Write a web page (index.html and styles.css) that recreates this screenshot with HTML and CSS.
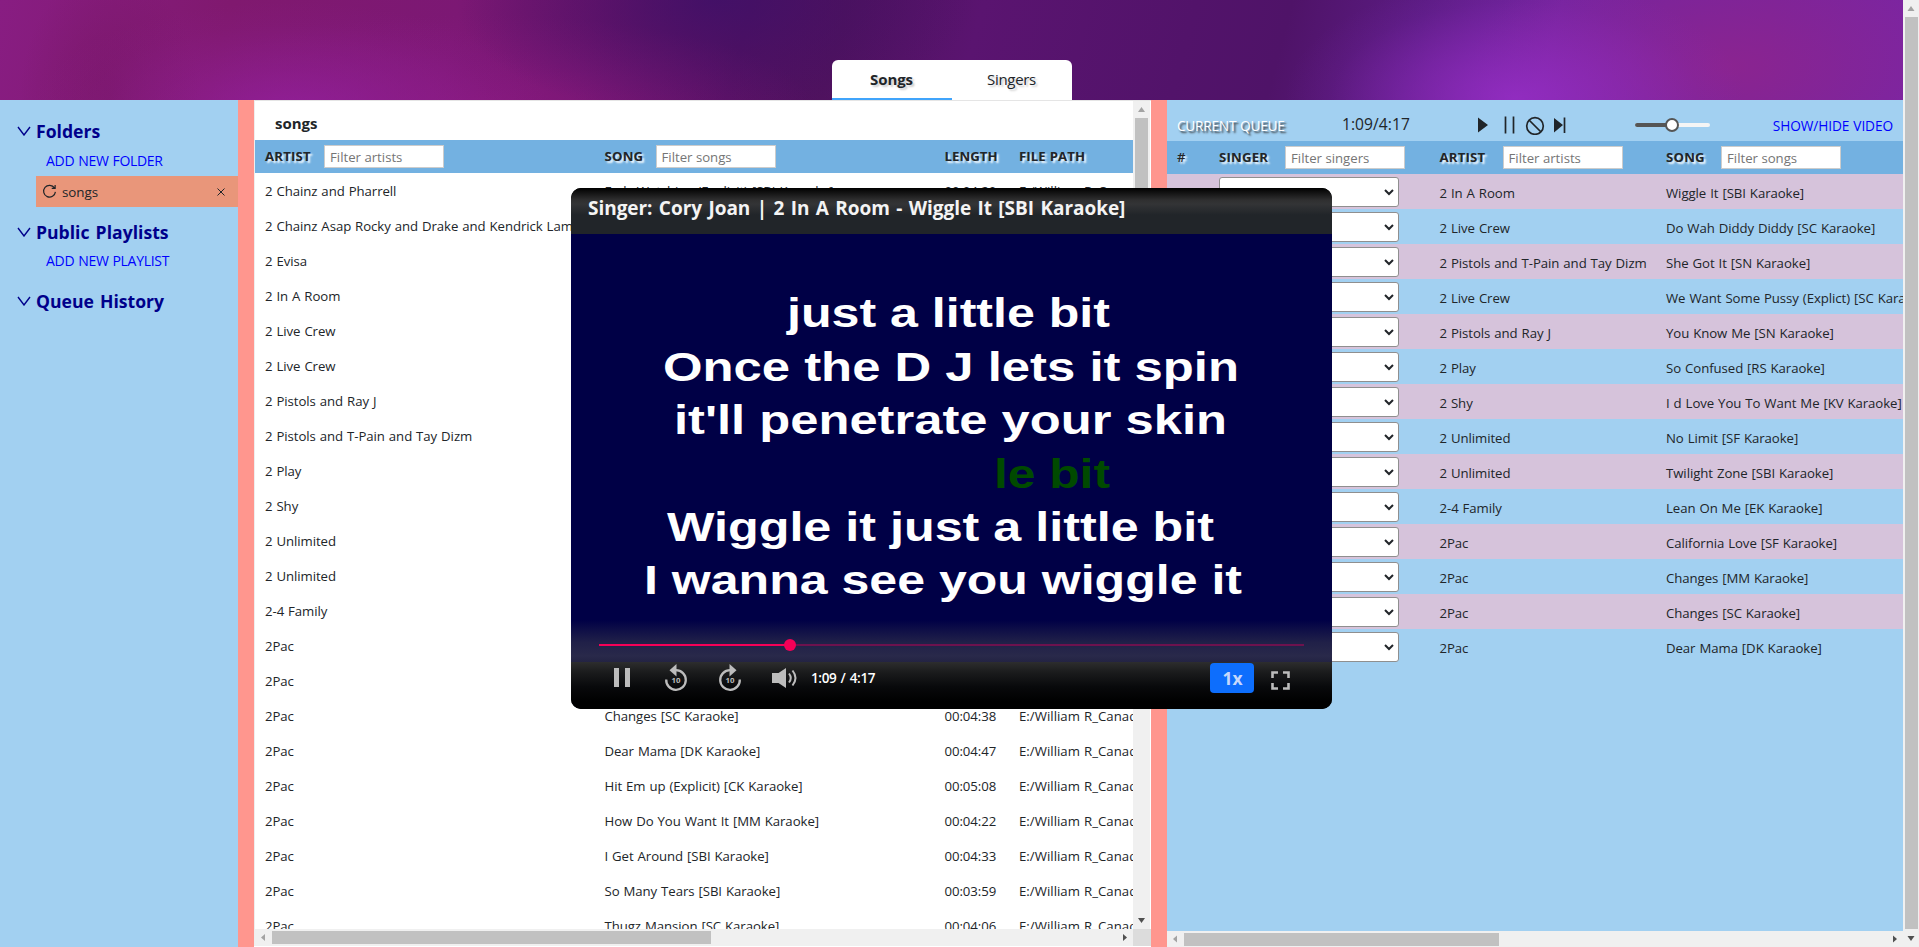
FILE: index.html
```html
<!DOCTYPE html>
<html lang="en">
<head>
<meta charset="utf-8">
<title>Karaoke</title>
<link rel="stylesheet" href="styles.css">
</head>
<body>
<div class="app">
  <div class="page">
    <header class="banner">
      <nav class="tabs"><a class="tab active">Songs</a><a class="tab">Singers</a></nav>
    </header>
    <main class="panes">
      <aside class="sidebar">
        <h2><svg class="chev" viewBox="0 0 14 10"><path d="M1 1l6 8 6-8"/></svg>Folders</h2>
        <a class="add">ADD NEW FOLDER</a>
        <div class="folder">
          <svg class="reload" viewBox="0 0 16 16"><path d="M13.3 4.2A6.3 6.3 0 1 0 14.3 8.4M14 1v3.6h-3.6"/></svg>
          <span>songs</span>
          <svg class="close" viewBox="0 0 8 8"><path d="M.5.5l7 7M7.5.5l-7 7"/></svg>
        </div>
        <h2 class="second"><svg class="chev" viewBox="0 0 14 10"><path d="M1 1l6 8 6-8"/></svg>Public Playlists</h2>
        <a class="add">ADD NEW PLAYLIST</a>
        <h2 class="third"><svg class="chev" viewBox="0 0 14 10"><path d="M1 1l6 8 6-8"/></svg>Queue History</h2>
      </aside>
      <div class="splitter"></div>
      <section class="library">
        <div class="lib-view">
          <div class="lib-content">
            <h3>songs</h3>
            <div class="row lib head"><span><b>ARTIST</b><input class="f1" placeholder="Filter artists"></span><span><b>SONG</b><input class="f2" placeholder="Filter songs"></span><span><b>LENGTH</b></span><span><b>FILE PATH</b></span></div>
            <div class="row lib"><span>2 Chainz and Pharrell</span><span>Feds Watching (Explicit) [SBI Karaoke]</span><span>00:04:20</span><span>E:/William R_Canada</span></div>
            <div class="row lib"><span>2 Chainz Asap Rocky and Drake and Kendrick Lamar</span></div>
            <div class="row lib"><span>2 Evisa</span></div>
            <div class="row lib"><span>2 In A Room</span></div>
            <div class="row lib"><span>2 Live Crew</span></div>
            <div class="row lib"><span>2 Live Crew</span></div>
            <div class="row lib"><span>2 Pistols and Ray J</span></div>
            <div class="row lib"><span>2 Pistols and T-Pain and Tay Dizm</span></div>
            <div class="row lib"><span>2 Play</span></div>
            <div class="row lib"><span>2 Shy</span></div>
            <div class="row lib"><span>2 Unlimited</span></div>
            <div class="row lib"><span>2 Unlimited</span></div>
            <div class="row lib"><span>2-4 Family</span></div>
            <div class="row lib"><span>2Pac</span></div>
            <div class="row lib"><span>2Pac</span></div>
            <div class="row lib"><span>2Pac</span><span>Changes [SC Karaoke]</span><span>00:04:38</span><span>E:/William R_Canada</span></div>
            <div class="row lib"><span>2Pac</span><span>Dear Mama [DK Karaoke]</span><span>00:04:47</span><span>E:/William R_Canada</span></div>
            <div class="row lib"><span>2Pac</span><span>Hit Em up (Explicit) [CK Karaoke]</span><span>00:05:08</span><span>E:/William R_Canada</span></div>
            <div class="row lib"><span>2Pac</span><span>How Do You Want It [MM Karaoke]</span><span>00:04:22</span><span>E:/William R_Canada</span></div>
            <div class="row lib"><span>2Pac</span><span>I Get Around [SBI Karaoke]</span><span>00:04:33</span><span>E:/William R_Canada</span></div>
            <div class="row lib"><span>2Pac</span><span>So Many Tears [SBI Karaoke]</span><span>00:03:59</span><span>E:/William R_Canada</span></div>
            <div class="row lib"><span>2Pac</span><span>Thugz Mansion [SC Karaoke]</span><span>00:04:06</span><span>E:/William R_Canada</span></div>
          </div>
          <div class="vbar"><i class="up dim"></i><div class="thumb lib-v"></div><i class="down"></i></div>
        </div>
        <div class="hbar"><i class="left dim"></i><div class="thumb lib-h"></div><i class="right"></i><div class="corner"></div></div>
      </section>
      <div class="splitter"></div>
      <section class="queue">
        <div class="q-top">
          <span class="q-title">CURRENT QUEUE</span>
          <span class="q-time">1:09/4:17</span>
          <svg class="q-icons" width="90" height="20" viewBox="0 0 90 20"><path class="solid" d="M1 2.5L11 10 1 17.5zM77 3l9 7-9 7.500z"/><path class="line" d="M28.500 1.500v17M36.500 1.500v17M87.500 2.500v15.500M52 5l12 12"/><circle class="line" cx="58" cy="11" r="8.300"/></svg>
          <div class="slider"><div class="fill"></div><div class="knob"></div></div>
          <a class="q-link">SHOW/HIDE VIDEO</a>
        </div>
        <div class="row que head"><span><b class="hash">#</b></span><span><b>SINGER</b><input class="f3" placeholder="Filter singers"></span><span><b>ARTIST</b><input class="f4" placeholder="Filter artists"></span><span><b>SONG</b><input class="f5" placeholder="Filter songs"></span></div>
        <div class="row que"><span></span><div class="select"><svg viewBox="0 0 10 7"><path d="M1 1l4 4 4-4"/></svg></div><span>2 In A Room</span><span>Wiggle It [SBI Karaoke]</span></div>
        <div class="row que"><span></span><div class="select"><svg viewBox="0 0 10 7"><path d="M1 1l4 4 4-4"/></svg></div><span>2 Live Crew</span><span>Do Wah Diddy Diddy [SC Karaoke]</span></div>
        <div class="row que"><span></span><div class="select"><svg viewBox="0 0 10 7"><path d="M1 1l4 4 4-4"/></svg></div><span>2 Pistols and T-Pain and Tay Dizm</span><span>She Got It [SN Karaoke]</span></div>
        <div class="row que"><span></span><div class="select"><svg viewBox="0 0 10 7"><path d="M1 1l4 4 4-4"/></svg></div><span>2 Live Crew</span><span>We Want Some Pussy (Explict) [SC Karaoke]</span></div>
        <div class="row que"><span></span><div class="select"><svg viewBox="0 0 10 7"><path d="M1 1l4 4 4-4"/></svg></div><span>2 Pistols and Ray J</span><span>You Know Me [SN Karaoke]</span></div>
        <div class="row que"><span></span><div class="select"><svg viewBox="0 0 10 7"><path d="M1 1l4 4 4-4"/></svg></div><span>2 Play</span><span>So Confused [RS Karaoke]</span></div>
        <div class="row que"><span></span><div class="select"><svg viewBox="0 0 10 7"><path d="M1 1l4 4 4-4"/></svg></div><span>2 Shy</span><span>I d Love You To Want Me [KV Karaoke]</span></div>
        <div class="row que"><span></span><div class="select"><svg viewBox="0 0 10 7"><path d="M1 1l4 4 4-4"/></svg></div><span>2 Unlimited</span><span>No Limit [SF Karaoke]</span></div>
        <div class="row que"><span></span><div class="select"><svg viewBox="0 0 10 7"><path d="M1 1l4 4 4-4"/></svg></div><span>2 Unlimited</span><span>Twilight Zone [SBI Karaoke]</span></div>
        <div class="row que"><span></span><div class="select"><svg viewBox="0 0 10 7"><path d="M1 1l4 4 4-4"/></svg></div><span>2-4 Family</span><span>Lean On Me [EK Karaoke]</span></div>
        <div class="row que"><span></span><div class="select"><svg viewBox="0 0 10 7"><path d="M1 1l4 4 4-4"/></svg></div><span>2Pac</span><span>California Love [SF Karaoke]</span></div>
        <div class="row que"><span></span><div class="select"><svg viewBox="0 0 10 7"><path d="M1 1l4 4 4-4"/></svg></div><span>2Pac</span><span>Changes [MM Karaoke]</span></div>
        <div class="row que"><span></span><div class="select"><svg viewBox="0 0 10 7"><path d="M1 1l4 4 4-4"/></svg></div><span>2Pac</span><span>Changes [SC Karaoke]</span></div>
        <div class="row que"><span></span><div class="select"><svg viewBox="0 0 10 7"><path d="M1 1l4 4 4-4"/></svg></div><span>2Pac</span><span>Dear Mama [DK Karaoke]</span></div>
        <div class="hbar q-h"><i class="left dim"></i><div class="thumb que-h"></div><i class="right"></i></div>
      </section>
    </main>
  </div>
  <div class="vbar page-v"><i class="up dim"></i><div class="thumb page-t"></div><i class="down"></i></div>
</div>

<div class="player">
  <div class="p-title">Singer: Cory Joan | 2 In A Room - Wiggle It [SBI Karaoke]</div>
  <div class="video">
    <svg width="761" height="428" viewBox="571 234 761 428">
      <g class="lyrics">
        <text x="787" y="327" textLength="323" lengthAdjust="spacingAndGlyphs">just a little bit</text>
        <text x="663" y="381" textLength="576" lengthAdjust="spacingAndGlyphs">Once the D J lets it spin</text>
        <text x="674" y="434" textLength="553" lengthAdjust="spacingAndGlyphs">it'll penetrate your skin</text>
        <text class="sung" x="994" y="487.500" textLength="116" lengthAdjust="spacingAndGlyphs">le bit</text>
        <text x="667" y="541" textLength="547" lengthAdjust="spacingAndGlyphs">Wiggle it just a little bit</text>
        <text x="644" y="594" textLength="598" lengthAdjust="spacingAndGlyphs">I wanna see you wiggle it</text>
      </g>
    </svg>
    <div class="progress"><div class="played"></div><div class="dot"></div></div>
  </div>
  <div class="controls">
    <svg class="c-pause" width="16" height="20" viewBox="0 0 16 20"><path d="M0 0h5v19H0zM11 0h5v19h-5z"/></svg>
    <svg class="c-seek" width="24" height="28" viewBox="0 0 24 28"><path class="ring" d="M2.200 15.500A9.800 9.800 0 1 0 12 6.200"/><path d="M12.500 0v12.500L5.500 6.300z"/><text x="12" y="19">10</text></svg>
    <svg class="c-seek fwd" width="24" height="28" viewBox="0 0 24 28"><path class="ring" d="M21.800 15.500A9.800 9.800 0 1 1 12 6.200"/><path d="M11.500 0v12.500L18.500 6.300z"/><text x="12" y="19">10</text></svg>
    <svg class="c-vol" width="25" height="20" viewBox="0 0 25 20"><path d="M0 5h6.500L14 0v20L6.500 15H0z"/><path class="wave" d="M17 5.500q3.500 4.500 0 9M20.500 2.500q6 7.500 0 15"/></svg>
    <span class="c-time">1:09 / 4:17</span>
    <span class="speed">1x</span>
    <svg class="c-full" width="19" height="19" viewBox="0 0 19 19"><path d="M1.500 7V1.500H7M12 1.500h5.500V7M17.500 12v5.500H12M7 17.500H1.500V12"/></svg>
  </div>
</div>
</body>
</html>
```
FILE: styles.css
```css
* { box-sizing: border-box; }
body { margin: 0; height: 947px; overflow: hidden; font: 13.2px/1.5 "Open Sans", "Noto Sans", sans-serif; letter-spacing: -0.06px; word-spacing: .6px; color: #212529; }
.app { display: flex; height: 947px; }
.page { width: 1903px; display: flex; flex-direction: column; }
.banner {
  height: 100px; display: flex; justify-content: center; align-items: flex-end;
  background:
    radial-gradient(ellipse 260px 110px at 290px 112px, rgba(148,32,158,.8), rgba(146,32,154,.4) 45%, rgba(144,30,150,.1) 80%, rgba(144,30,150,0)),
    radial-gradient(ellipse 90px 130px at 110px 98px, rgba(118,22,100,.7), rgba(118,22,100,.35) 45%, rgba(118,22,100,0)),
    radial-gradient(ellipse 230px 120px at 1515px 98px, rgba(150,46,198,.85), rgba(148,45,196,.45) 45%, rgba(140,45,196,.1) 80%, rgba(140,45,196,0)),
    radial-gradient(ellipse 260px 130px at 1730px 66px, rgba(144,36,140,.75), rgba(142,36,140,.4) 45%, rgba(142,36,140,0)),
    radial-gradient(ellipse 260px 120px at 715px 0, rgba(60,16,104,.75), rgba(62,16,102,.4) 45%, rgba(62,16,102,0)),
    radial-gradient(ellipse 330px 90px at 480px 105px, rgba(138,26,128,.8), rgba(136,26,128,.4) 50%, rgba(136,26,128,0)),
    linear-gradient(105deg, #881d82 0, #80196f 12%, #7c1874 24%, #6d146c 31%, #531061 39%, #50125e 44%, #5a1470 51%, #52136a 62%, #4f1368 67%, #5c1c84 74%, #7424a0 81%, #7a249c 92%, #7a25a4 100%);
}
.tabs { display: flex; width: 240px; height: 40px; background: #fff; border-radius: 6px 6px 0 0; }
.tab { flex: 1; text-align: center; line-height: 39px; font-size: 15px; letter-spacing: -.3px; text-shadow: 2px 2px 2px #ccc; border-bottom: 2px solid transparent; }
.tab.active { font-weight: 700; letter-spacing: -.1px; border-bottom-color: #40a4fb; }
.panes { display: flex; height: 847px; }

.sidebar { width: 238px; background: #a2d0f1; padding-top: 17px; }
.sidebar h2 { margin: 0; height: 28px; display: flex; align-items: center; padding-left: 17px; gap: 5px; font-size: 17.6px; letter-spacing: 0; word-spacing: 1.500px; line-height: 28px; color: #00008b; }
.chev { width: 14px; height: 10px; fill: none; stroke: #00008b; stroke-width: 1.400; }
.add { display: block; margin-left: 46px; height: 31px; line-height: 31px; font-size: 14px; letter-spacing: -.3px; color: #00f; }
.second + .add { line-height: 30px; }
.folder { margin-left: 36px; height: 31px; background: #e9967a; display: flex; align-items: center; padding: 0 13px 0 6px; }
.folder span { flex: 1; padding-top: 1px; font-size: 13.400px; }
.reload { width: 15px; height: 15px; margin-right: 5px; fill: none; stroke: #212529; stroke-width: 1.300; }
.close { width: 8px; height: 8px; fill: none; stroke: #212529; }
.sidebar .second { margin-top: 11px; }
.sidebar .third { margin-top: 10px; }
.splitter { width: 16px; background: #ff968e; flex: none; }

.library { width: 897px; height: 846px; display: flex; flex-direction: column; background: #fff; border-left: 1px solid #eee; border-top: 1px solid #e5e5e5; }
.lib-view { height: 828px; display: flex; overflow: hidden; }
.lib-content { width: 878px; overflow: hidden; }
.library h3 { margin: 0; height: 39px; padding-left: 20px; font-size: 15px; line-height: 45px; letter-spacing: 0; }
.row { display: grid; align-items: center; height: 35px; padding-left: 10px; white-space: nowrap; overflow: hidden; }
.row:not(.head) > span { padding-top: 2px; }
.row.que:not(.head) > span { padding-top: 4px; }
.row.lib { grid-template-columns: 339.500px 340px 74.500px 1fr; }
.row.lib > span:nth-child(4) { letter-spacing: .03px; }
.row.que { grid-template-columns: 42px 220.500px 226.500px 1fr; }
.row.que:nth-child(odd) { background: #d6c3db; }
.row.head, .row.que.head { height: 33px; background: #73b1e1; }
.head span { display: flex; align-items: center; }
.head b { width: 59px; padding-top: 1px; text-shadow: 2px 2px 2px #fff; letter-spacing: .2px; }
.head span:nth-child(n+3) b { width: auto; letter-spacing: .05px; }
.head .hash { font-weight: 600; }
.head input { width: 120px; height: 23px; border: 1px solid #ccc; padding: 0 5px; font: 13.200px "Open Sans", sans-serif; letter-spacing: 0; background: #fff; outline: 0; }
.head input::placeholder { color: #757575; }
.lib.head span:nth-child(2) b { width: 51px; }
.que.head span:nth-child(2) b { width: 66px; }
.que.head span:nth-child(3) b { width: 63px; letter-spacing: .2px; }
.que.head span:nth-child(4) b { width: 55px; letter-spacing: .2px; }

.queue { width: 736px; background: #a2d0f1; display: flex; flex-direction: column; overflow: hidden; }
.q-top { height: 41px; flex: none; display: flex; align-items: center; padding: 8px 10px 0; }
.q-title { width: 165px; color: #fff; text-shadow: 2px 2px 2px #333; padding-top: 3px; letter-spacing: -.25px; font-size: 13.700px; }
.q-time { width: 135px; padding-top: 1px; font-size: 15.600px; letter-spacing: .05px; }
.q-icons { width: 90px; margin-right: 68px; }
.q-icons .solid { fill: #212529; }
.q-icons .line { fill: none; stroke: #212529; stroke-width: 1.700; }
.slider { width: 75px; height: 4px; border-radius: 2px; background: #f5f5f5; position: relative; }
.fill { width: 37px; height: 4px; border-radius: 2px; background: #555; }
.knob { position: absolute; left: 30px; top: -5px; width: 14px; height: 14px; border: 2px solid #555; border-radius: 50%; background: #fff; }
.q-link { margin-left: auto; padding-top: 3px; color: #00f; font-size: 13.700px; letter-spacing: -.1px; }
.row.que { flex: none; }
.select { width: 180px; height: 30px; border: 1px solid #8f8f8f; border-radius: 3px; background: #fff; display: flex; align-items: center; justify-content: flex-end; padding-right: 4px; margin-top: 1px; }
.select svg { width: 10px; height: 7px; fill: none; stroke: #212529; stroke-width: 2; }

.vbar { width: 17px; background: #f0f0f0; display: flex; flex-direction: column; align-items: center; }
.hbar { height: 17px; background: #f0f0f0; display: flex; align-items: center; flex: none; }
.thumb { background: #c1c1c1; }
.up, .down, .left, .right { width: 17px; height: 17px; flex: none; display: block; background: #505050; }
.up { clip-path: polygon(5px 11px, 8.5px 6px, 12px 11px); }
.down { clip-path: polygon(5px 6px, 12px 6px, 8.5px 11px); margin-top: auto; }
.left { clip-path: polygon(10px 5px, 10px 12px, 6px 8.500px); }
.right { clip-path: polygon(7px 5px, 7px 12px, 11px 8.500px); margin-left: auto; }
.dim { background: #a3a3a3; }
.vbar .thumb { width: 13px; }
.hbar .thumb { height: 13px; }
.lib-v { height: 190px; }
.lib-h { width: 439px; }
.corner { width: 18px; height: 17px; background: #dcdcdc; }
.q-h { margin-top: auto; height: 16px; }
.que-h { width: 315px; }
.page-v { width: 16px; }
.page-t { height: 912px; }

.player { position: absolute; left: 571px; top: 188px; width: 761px; height: 521px; border-radius: 10px; overflow: hidden; background: #000; color: #fff; }
.p-title { height: 46px; padding-left: 17px; line-height: 40px; font-weight: 700; font-size: 19px; letter-spacing: -.04px; word-spacing: 1.500px; white-space: nowrap; background: linear-gradient(#000 0, #2f2f30 12px, #333436 16px, #212529 27px); color: #f4f4f4; }
.video { height: 428px; background: linear-gradient(#000046 0 386px, #202048 408px, #29294a 422px, #232343); position: relative; }
.video svg { display: block; }
.lyrics { font: 700 41px "Liberation Sans", Arial, sans-serif; fill: #fff; letter-spacing: 0; word-spacing: 0; }
.lyrics .sung { fill: #004a00; }
.progress { position: absolute; left: 28px; top: 410px; width: 705px; height: 2px; background: #6d124e; }
.played { width: 191px; height: 2px; background: #f50057; }
.dot { position: absolute; left: 185px; top: -5px; width: 12px; height: 12px; border-radius: 50%; background: #f50057; }
.controls { height: 47px; display: flex; align-items: flex-start; padding-left: 43px; background: linear-gradient(#2d2d2e 0, #1b1c1d 10px, #08090b 25px, #000 40px); }
.controls svg { fill: #bcbcbc; }
.c-pause { margin: 6px 34px 0 0; }
.c-seek { margin: 2px 30px 0 0; }
.c-seek text { font: 700 7.800px "Open Sans", sans-serif; text-anchor: middle; letter-spacing: 0; }
.controls .ring, .controls .wave { fill: none; stroke: #bcbcbc; stroke-width: 2; }
.controls .ring { stroke-width: 2.300; }
.c-vol { margin: 6px 14px 0 0; }
.c-time { width: 399px; line-height: 33px; font-size: 13.500px; font-weight: 600; letter-spacing: -.35px; word-spacing: 1px; }
.speed { width: 44px; height: 30px; margin-top: 1px; border-radius: 4px; background: #0d6efd; color: #c5d8fb; font-size: 17.500px; font-weight: 700; line-height: 31px; text-align: center; padding-left: 1px; }
.controls .c-full { margin: 9px 0 0 17px; fill: none; stroke: #bcbcbc; stroke-width: 2.600; }
```
